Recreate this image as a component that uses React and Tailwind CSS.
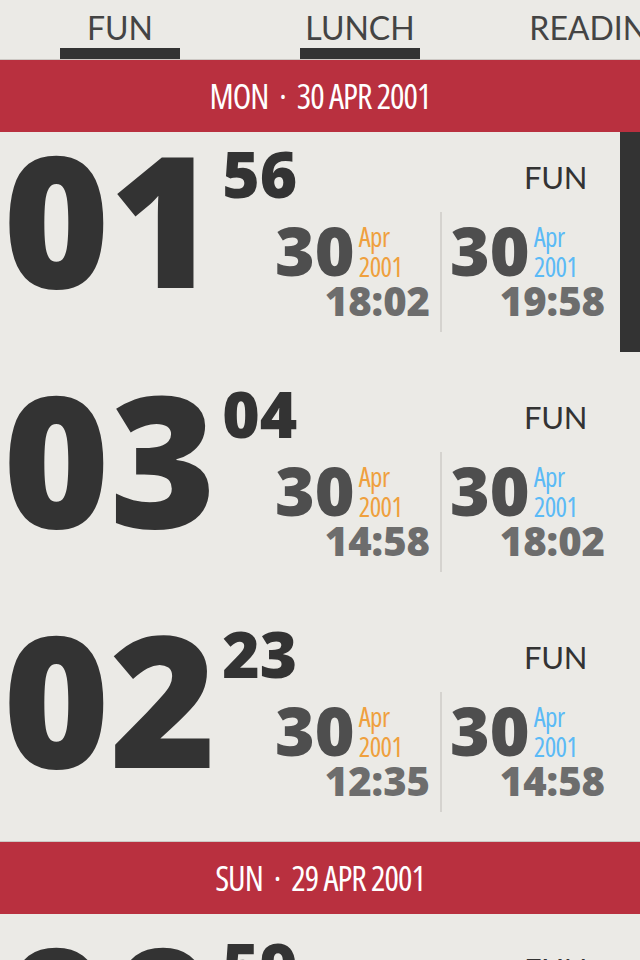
const heavy = { fontFamily: '"Open Sans", "Liberation Sans", sans-serif' };

const tabs = [
  { name: 'FUN', active: true },
  { name: 'LUNCH', active: true },
  { name: 'READING', active: false },
];

const days = [
  {
    label: 'MON',
    date: '30 APR 2001',
    entries: [
      { hh: '01', mm: '56', tag: 'FUN', from: { d: '30', m: 'Apr', y: '2001', t: '18:02' }, to: { d: '30', m: 'Apr', y: '2001', t: '19:58' } },
      { hh: '03', mm: '04', tag: 'FUN', from: { d: '30', m: 'Apr', y: '2001', t: '14:58' }, to: { d: '30', m: 'Apr', y: '2001', t: '18:02' } },
      { hh: '02', mm: '23', tag: 'FUN', from: { d: '30', m: 'Apr', y: '2001', t: '12:35' }, to: { d: '30', m: 'Apr', y: '2001', t: '14:58' } },
    ],
  },
  {
    label: 'SUN',
    date: '29 APR 2001',
    entries: [
      { hh: '00', mm: '59', tag: 'FUN', from: { d: '29', m: 'Apr', y: '2001', t: '11:36' }, to: { d: '29', m: 'Apr', y: '2001', t: '12:35' } },
    ],
  },
];

const DateBlock = ({ when, accent }) => (
  <div className="w-[155px] h-[120px] shrink-0">
    <div className="flex items-start pt-[4px]">
      <span className="shrink-0 text-[68px] leading-none font-extrabold text-[#4e4e4e]" style={heavy}>
        {when.d}
      </span>
      <div
        className={`ml-[4px] mt-[6px] shrink-0 text-[27px] leading-[30px] tracking-[-0.02em] font-medium font-stretch-[75%] font-['Open_Sans',sans-serif] ${accent}`}
      >
        <div>{when.m}</div>
        <div>{when.y}</div>
      </div>
    </div>
    <div className="-mt-[3px] text-right text-[40px] leading-none font-extrabold whitespace-nowrap text-[#6d6d6d]" style={heavy}>
      {when.t}
    </div>
  </div>
);

const Entry = ({ item, gap }) => (
  <div className={`flex h-[230px] shrink-0 ${gap ? 'mt-[10px]' : ''}`}>
    <div className="flex w-[275px] shrink-0 items-start pl-[3px]">
      <span className="-mt-[6px] shrink-0 text-[182px] leading-none font-extrabold text-[#333333]" style={heavy}>
        {item.hh}
      </span>
      <span className="ml-[6px] mt-[10px] shrink-0 text-[64px] leading-none font-extrabold text-[#333333]" style={heavy}>
        {item.mm}
      </span>
    </div>
    <div className="flex flex-1 flex-col items-end pr-[35px]">
      <div className="mt-[30px] mr-[18px] text-[31px] leading-none tracking-[-0.01em] text-[#333333] font-['Lato',sans-serif]">{item.tag}</div>
      <div className="mt-[19px] flex items-start">
        <DateBlock when={item.from} accent="text-[#efa03d]" />
        <div className="ml-[10px] mr-[8px] h-[120px] w-[2px] shrink-0 bg-[#d5d3cf]" />
        <DateBlock when={item.to} accent="text-[#5bbaf6]" />
      </div>
    </div>
  </div>
);

const DayBanner = ({ label, date }) => (
  <div className="flex h-[72px] shrink-0 items-center justify-center bg-[#b9303f] shadow-[0_-1px_0_#cdc8c4]">
    <span className="whitespace-nowrap text-[34px] leading-none tracking-[-0.03em] font-medium font-stretch-[75%] text-white font-['Open_Sans',sans-serif]">
      {label}
      <span className="mx-[11px]">·</span>
      {date}
    </span>
  </div>
);

export default function App() {
  return (
    <div className="relative flex h-[960px] w-[640px] flex-col overflow-hidden bg-[#ebeae6]">
      <div className="flex h-[60px] shrink-0">
        {tabs.map((tab) => (
          <div key={tab.name} className="flex w-[240px] shrink-0 flex-col items-center">
            <div className="pt-[12px] text-[32px] leading-none whitespace-nowrap text-[#444444] font-['Lato',sans-serif]">
              {tab.name}
            </div>
            {tab.active && <div className="mt-auto h-[12px] w-[120px] bg-[#333333]" />}
          </div>
        ))}
      </div>

      {days.map((day, i) => (
        <div key={day.date} className="flex flex-col">
          <DayBanner label={day.label} date={day.date} />
          {day.entries.map((item, j) => (
            <Entry key={item.hh + item.mm} item={item} gap={j > 0 || i > 0} />
          ))}
        </div>
      ))}

      {/* scroll indicator */}
      <div className="absolute right-0 top-[132px] h-[220px] w-[20px] bg-[#333333]" />
    </div>
  );
}
